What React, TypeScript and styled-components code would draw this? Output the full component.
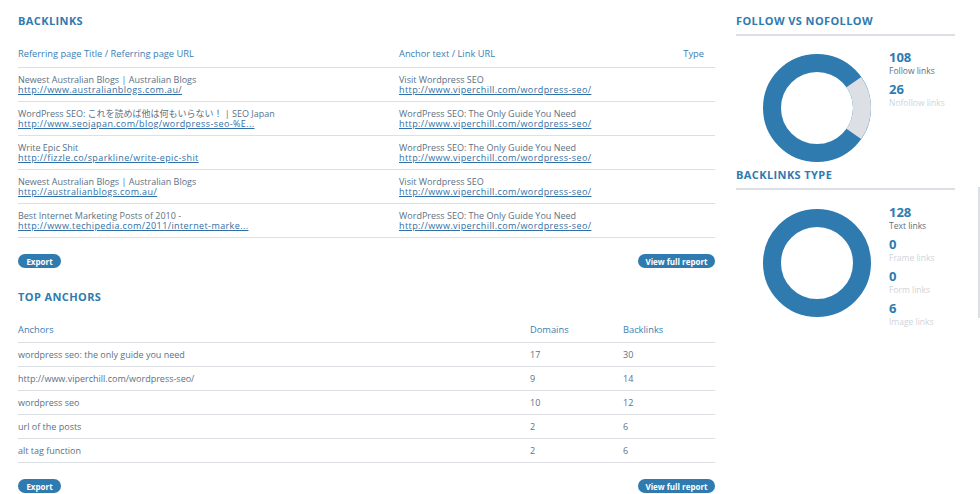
import styled, { createGlobalStyle } from "styled-components";

const colors = {
  blue: "#2f7bb0",
  head: "#3a7eb3",
  text: "#5b7185",
  link: "#2f6fa6",
  line: "#dcdfe4",
  pale: "#d0d4da",
};

const GlobalStyle = createGlobalStyle`
  html, body {
    margin: 0;
    padding: 0;
    background: #ffffff;
  }
  body {
    font-family: "Open Sans", "Noto Sans", "Noto Sans CJK JP", sans-serif;
  }
`;

const Page = styled.div`
  display: flex;
  width: 980px;
  height: 494px;
  overflow: hidden;
  box-sizing: border-box;
  padding-left: 18px;
`;

const Main = styled.div`
  width: 697px;
  display: flex;
  flex-direction: column;
`;

const Side = styled.div`
  width: 219px;
  margin-left: 21px;
  display: flex;
  flex-direction: column;
`;

const Edge = styled.div`
  width: 2px;
  height: 131px;
  margin-top: 187px;
  margin-left: 23px;
  background: ${colors.line};
`;

const Heading = styled.h2<{ $top: number; $underline?: boolean }>`
  margin: 0;
  font-size: 11px;
  font-weight: 700;
  color: ${colors.blue};
  letter-spacing: 0.4px;
  line-height: 14px;
  padding-top: ${(p) => p.$top}px;
  ${(p) =>
    p.$underline &&
    `
    padding-bottom: 6px;
    border-bottom: 2px solid ${colors.line};
  `}
`;

const Table = styled.div<{ $top: number }>`
  display: flex;
  flex-direction: column;
  margin-top: ${(p) => p.$top}px;
`;

const Row = styled.div<{ $cols: string; $height: number }>`
  display: grid;
  grid-template-columns: ${(p) => p.$cols};
  align-items: center;
  height: ${(p) => p.$height}px;
  border-bottom: 1px solid ${colors.line};
  font-size: 9px;
  color: ${colors.text};
`;

const HeadCell = styled.div<{ $right?: boolean }>`
  color: ${colors.head};
  font-size: 9.3px;
  text-align: ${(p) => (p.$right ? "right" : "left")};
  padding-right: ${(p) => (p.$right ? "11px" : "0")};
`;

const Cell = styled.div`
  display: flex;
  flex-direction: column;
  line-height: 10px;
  white-space: nowrap;
`;

const Title = styled.span`
  color: ${colors.text};
`;

const Link = styled.a`
  color: ${colors.link};
  text-decoration: underline;
  letter-spacing: 0.4px;
`;

const Actions = styled.div<{ $top: number }>`
  display: flex;
  justify-content: space-between;
  margin-top: ${(p) => p.$top}px;
`;

const Pill = styled.button<{ $w: number }>`
  width: ${(p) => p.$w}px;
  height: 14px;
  border: none;
  border-radius: 7px;
  background: ${colors.blue};
  color: #ffffff;
  font-family: inherit;
  font-size: 8px;
  font-weight: 700;
  padding: 0;
  cursor: pointer;
`;

const ChartBlock = styled.div<{ $top: number }>`
  display: flex;
  align-items: flex-start;
  margin-top: ${(p) => p.$top}px;
  padding-left: 27px;
`;

const Stats = styled.div`
  display: flex;
  flex-direction: column;
  margin-left: 18px;
  margin-top: -10px;
`;

const Num = styled.div`
  font-size: 13px;
  font-weight: 700;
  color: ${colors.blue};
  line-height: 15px;
  margin-top: 6px;
`;

const Label = styled.div<{ $muted?: boolean }>`
  font-size: 8.5px;
  line-height: 11px;
  color: ${(p) => (p.$muted ? colors.pale : colors.text)};
`;

const Donut = ({ gray }: { gray: number }) => {
  const r = 45;
  const c = 2 * Math.PI * r;
  const g = (gray / 360) * c;
  return (
    <svg width="108" height="108" viewBox="0 0 108 108">
      <circle cx="54" cy="54" r={r} fill="none" stroke={colors.blue} strokeWidth="18" />
      {gray > 0 && (
        <circle
          cx="54"
          cy="54"
          r={r}
          fill="none"
          stroke="#dcdfe4"
          strokeWidth="18"
          strokeDasharray={`${g} ${c - g}`}
          transform={`rotate(${-gray / 2} 54 54)`}
        />
      )}
    </svg>
  );
};

const backlinks = [
  {
    title: "Newest Australian Blogs | Australian Blogs",
    url: "http://www.australianblogs.com.au/",
    anchor: "Visit Wordpress SEO",
  },
  {
    title: "WordPress SEO: これを読めば他は何もいらない！ | SEO Japan",
    url: "http://www.seojapan.com/blog/wordpress-seo-%E...",
    anchor: "WordPress SEO: The Only Guide You Need",
  },
  {
    title: "Write Epic Shit",
    url: "http://fizzle.co/sparkline/write-epic-shit",
    anchor: "WordPress SEO: The Only Guide You Need",
  },
  {
    title: "Newest Australian Blogs | Australian Blogs",
    url: "http://australianblogs.com.au/",
    anchor: "Visit Wordpress SEO",
  },
  {
    title: "Best Internet Marketing Posts of 2010 -",
    url: "http://www.techipedia.com/2011/internet-marke...",
    anchor: "WordPress SEO: The Only Guide You Need",
  },
];

const anchors = [
  ["wordpress seo: the only guide you need", "17", "30"],
  ["http://www.viperchill.com/wordpress-seo/", "9", "14"],
  ["wordpress seo", "10", "12"],
  ["url of the posts", "2", "6"],
  ["alt tag function", "2", "6"],
];

const blCols = "381px 1fr 60px";
const anCols = "512px 93px 92px";

const App = () => {
  return (
    <>
      <GlobalStyle />
      <Page>
        <Main>
          <Heading $top={14}>BACKLINKS</Heading>
          <Table $top={12}>
            <Row $cols={blCols} $height={27}>
              <HeadCell>Referring page Title / Referring page URL</HeadCell>
              <HeadCell>Anchor text / Link URL</HeadCell>
              <HeadCell $right>Type</HeadCell>
            </Row>
            {backlinks.map((b, i) => (
              <Row key={i} $cols={blCols} $height={33}>
                <Cell>
                  <Title>{b.title}</Title>
                  <Link>{b.url}</Link>
                </Cell>
                <Cell>
                  <Title>{b.anchor}</Title>
                  <Link>http://www.viperchill.com/wordpress-seo/</Link>
                </Cell>
                <Cell />
              </Row>
            ))}
          </Table>
          <Actions $top={16}>
            <Pill $w={43}>Export</Pill>
            <Pill $w={77}>View full report</Pill>
          </Actions>
          <Heading $top={22}>TOP ANCHORS</Heading>
          <Table $top={13}>
            <Row $cols={anCols} $height={25}>
              <HeadCell>Anchors</HeadCell>
              <HeadCell>Domains</HeadCell>
              <HeadCell>Backlinks</HeadCell>
            </Row>
            {anchors.map((a, i) => (
              <Row key={i} $cols={anCols} $height={23}>
                <span>{a[0]}</span>
                <span>{a[1]}</span>
                <span>{a[2]}</span>
              </Row>
            ))}
          </Table>
          <Actions $top={16}>
            <Pill $w={43}>Export</Pill>
            <Pill $w={77}>View full report</Pill>
          </Actions>
        </Main>
        <Side>
          <Heading $top={14} $underline>
            FOLLOW VS NOFOLLOW
          </Heading>
          <ChartBlock $top={18}>
            <Donut gray={70} />
            <Stats>
              <Num>108</Num>
              <Label>Follow links</Label>
              <Num>26</Num>
              <Label $muted>Nofollow links</Label>
            </Stats>
          </ChartBlock>
          <Heading $top={6} $underline>
            BACKLINKS TYPE
          </Heading>
          <ChartBlock $top={19}>
            <Donut gray={0} />
            <Stats>
              <Num>128</Num>
              <Label>Text links</Label>
              <Num>0</Num>
              <Label $muted>Frame links</Label>
              <Num>0</Num>
              <Label $muted>Form links</Label>
              <Num>6</Num>
              <Label $muted>Image links</Label>
            </Stats>
          </ChartBlock>
        </Side>
        <Edge />
      </Page>
    </>
  );
};

export default App;
